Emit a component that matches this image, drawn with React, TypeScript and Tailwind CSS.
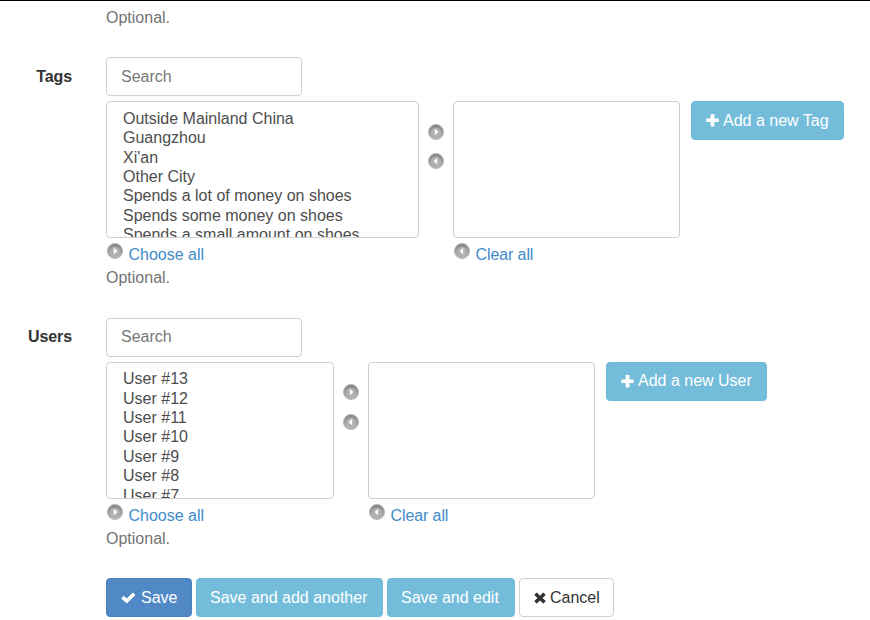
import type { ReactNode } from "react";

const tags = [
  "Outside Mainland China",
  "Guangzhou",
  "Xi'an",
  "Other City",
  "Spends a lot of money on shoes",
  "Spends some money on shoes",
  "Spends a small amount on shoes",
];
const users = ["User #13", "User #12", "User #11", "User #10", "User #9", "User #8", "User #7"];

function Arrow({ dir }: { dir: "left" | "right" }) {
  return (
    <svg className="block shrink-0" width="18" height="18" viewBox="0 0 18 18">
      <defs>
        <linearGradient id={"disc-" + dir} x1="0" y1="0" x2="0" y2="1">
          <stop offset="0" stopColor="#828282" />
          <stop offset="0.5" stopColor="#a0a0a0" />
          <stop offset="1" stopColor="#b8b8b8" />
        </linearGradient>
      </defs>
      <circle cx="9" cy="9" r="7.6" fill={"url(#disc-" + dir + ")"} stroke="#b4b4b4" strokeWidth="0.8" />
      <circle cx="9" cy="9.5" r="4.8" fill="#b0b0b0" />
      <path d={dir === "right" ? "M7.8 5.8v6.6l3.6-3.3z" : "M10.2 5.8v6.6L6.6 9.1z"} fill="#fff" />
    </svg>
  );
}

function Plus() {
  return (
    <svg className="mr-1 block" width="13" height="13" viewBox="0 0 13 13" fill="currentColor">
      <path d="M5.1 0h2.8q.5 0 .5.5v3.9h3.9q.5 0 .5.5v2.6q0 .5-.5.5H8.4v3.9q0 .5-.5.5H5.1q-.5 0-.5-.5V8H.7q-.5 0-.5-.5V4.900q0-.5.5-.5h3.900V.5q0-.5.5-.5z" />
    </svg>
  );
}

function Check() {
  return (
    <svg className="mr-[5px] block" width="15" height="12" viewBox="0 0 15 12" fill="currentColor">
      <path d="M.7 5.900l1.700-1.700q.5-.5 1 0l2.400 2.200L11.300.9q.5-.5 1 0l1.700 1.700q.5.500 0 1L6.400 11q-.5.5-1 0L.7 6.900q-.5-.5 0-1z" />
    </svg>
  );
}

function Cross() {
  return (
    <svg className="mr-[4px] block" width="12" height="12" viewBox="0 0 12 12" fill="currentColor">
      <path d="M.6 2.500L2.300.8q.4-.3.800 0L6 3.700 8.900.8q.4-.3.800 0l1.700 1.700q.3.4 0 .8L8.500 6l2.900 2.800q.3.400 0 .800l-1.700 1.700q-.4.300-.8 0L6 8.400l-2.900 2.900q-.4.300-.8 0L.6 9.600q-.3-.4 0-.8L3.500 6 .6 3.300q-.3-.4 0-.8z" />
    </svg>
  );
}

function Button({ className, children }: { className: string; children: ReactNode }) {
  return (
    <button className={"flex h-[39px] shrink-0 items-center rounded-[4px] border whitespace-nowrap " + className}>
      {children}
    </button>
  );
}

type FieldProps = { label: string; options: string[]; listWidth: string; add: string; addWidth: string };

function Field({ label, options, listWidth, add, addWidth }: FieldProps) {
  return (
    <section className="flex h-[260.5px] items-start">
      <div className="w-[72px] pt-[9.9px] text-right leading-[20px] font-bold tracking-[-0.1px] text-[#333]">{label}</div>
      <div className="ml-[34px]">
        <input
          placeholder="Search"
          className="block h-[39px] w-[196px] rounded-[4px] border border-[#d0d0d0] px-[14px] placeholder:text-[#777]"
        />
        <div className="mt-[5px] flex items-start">
          <div>
            <div className={"h-[137px] overflow-hidden rounded-[4px] border border-[#d0d0d0] pt-[6.8px] pl-4 text-[#4d4d4d] " + listWidth}>
              {options.map((o) => (
                <div key={o} className="h-[19.4px] leading-[20px] whitespace-nowrap">{o}</div>
              ))}
            </div>
            <div className="flex h-[29px] pt-[4px]">
              <Arrow dir="right" />
              <a className="ml-[4.5px] pt-[2px] leading-[22px] text-[#428bca]">Choose all</a>
            </div>
          </div>
          <div className="ml-2 flex w-[18px] flex-col gap-[11.5px] pt-[21.5px]">
            <Arrow dir="right" />
            <Arrow dir="left" />
          </div>
          <div className="ml-2">
            <div className="h-[137px] w-[227px] rounded-[4px] border border-[#d0d0d0]" />
            <div className="flex pt-[4px]">
              <Arrow dir="left" />
              <a className="ml-[4.5px] pt-[2px] leading-[22px] tracking-[-0.1px] text-[#428bca]">Clear all</a>
            </div>
          </div>
          <Button className={"ml-[11px] border-[#6dbbdb] bg-[#73bddb] pl-[14px] text-white " + addWidth}>
            <Plus />
            {add}
          </Button>
        </div>
        <p className="leading-[22px] text-[#737373]">Optional.</p>
      </div>
    </section>
  );
}

export default function App() {
  return (
    <main className="h-[620px] w-[870px] overflow-hidden border-t border-black bg-white font-['Liberation_Sans',Arial,sans-serif] text-[16px]">
      <p className="h-14 pt-[6px] pl-[106px] leading-[22px] text-[#737373]">Optional.</p>
      <Field label="Tags" options={tags} listWidth="w-[313px]" add="Add a new Tag" addWidth="w-[153px]" />
      <Field label="Users" options={users} listWidth="w-[228px]" add="Add a new User" addWidth="w-[161px]" />
      <div className="flex gap-1 pl-[106px]">
        <Button className="w-[86px] border-[#4a84c0] bg-[#5089c6] pl-[14px] text-white"><Check />Save</Button>
        <Button className="w-[187px] border-[#6dbbdb] bg-[#73bddb] pl-[13px] text-white">Save and add another</Button>
        <Button className="w-[128px] border-[#6dbbdb] bg-[#73bddb] pl-[13px] text-white">Save and edit</Button>
        <Button className="w-[95px] border-[#d0d0d0] bg-white pl-[14px] text-[#333]"><Cross />Cancel</Button>
      </div>
    </main>
  );
}
